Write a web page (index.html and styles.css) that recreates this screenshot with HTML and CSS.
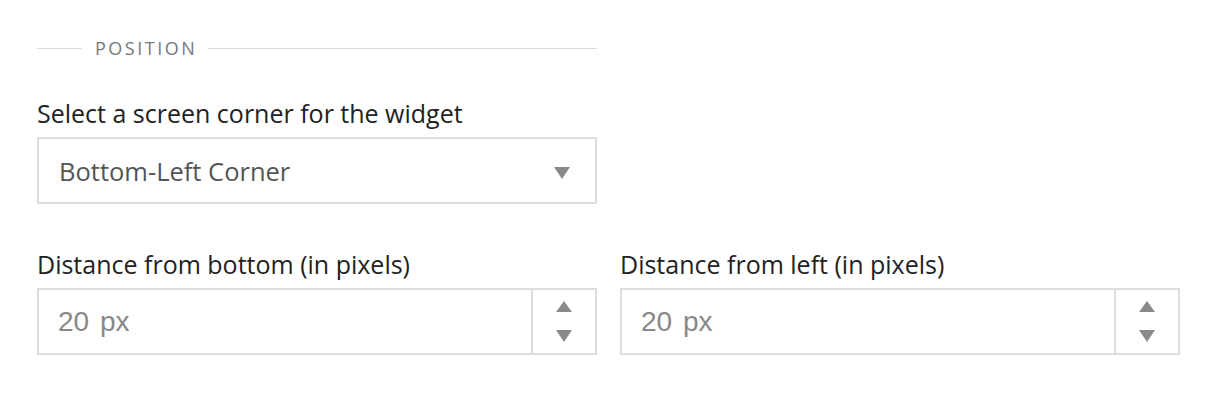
FILE: index.html
```html
<!DOCTYPE html>
<html>
<head>
<meta charset="utf-8">
<link rel="stylesheet" href="styles.css">
</head>
<body>
<div class="panel">
  <div class="section-title">
    <span class="line line-short"></span>
    <span class="title-text">POSITION</span>
    <span class="line line-long"></span>
  </div>

  <div class="field field-select">
    <label class="label">Select a screen corner for the widget</label>
    <div class="select">
      <span class="select-value">Bottom-Left Corner</span>
      <svg class="caret" width="16" height="12" viewBox="0 0 16 12"><polygon points="0,0 16,0 8,12" fill="#8a8a8a"/></svg>
    </div>
  </div>

  <div class="row">
    <div class="field">
      <label class="label">Distance from bottom (in pixels)</label>
      <div class="number">
        <span class="number-value">20 px</span>
        <div class="spinner">
          <svg width="16" height="11" viewBox="0 0 16 11"><polygon points="8,0 16,11 0,11" fill="#8a8a8a"/></svg>
          <svg width="16" height="12" viewBox="0 0 16 12"><polygon points="0,0 16,0 8,12" fill="#8a8a8a"/></svg>
        </div>
      </div>
    </div>
    <div class="field">
      <label class="label">Distance from left (in pixels)</label>
      <div class="number">
        <span class="number-value">20 px</span>
        <div class="spinner">
          <svg width="16" height="11" viewBox="0 0 16 11"><polygon points="8,0 16,11 0,11" fill="#8a8a8a"/></svg>
          <svg width="16" height="12" viewBox="0 0 16 12"><polygon points="0,0 16,0 8,12" fill="#8a8a8a"/></svg>
        </div>
      </div>
    </div>
  </div>
</div>
</body>
</html>
```

FILE: styles.css
```css
html, body {
  margin: 0;
  padding: 0;
  background: #ffffff;
}

body {
  font-family: "Open Sans", "Noto Sans", sans-serif;
  color: #222222;
}

.panel {
  padding: 36px 0 0 37px;
  width: 1143px;
}

.section-title {
  display: flex;
  align-items: center;
  width: 560px;
  height: 24px;
}

.line {
  height: 1px;
  background: #dcdcdc;
}

.line-short {
  width: 45px;
}

.line-long {
  flex: 1;
}

.title-text {
  font-size: 18px;
  letter-spacing: 2.5px;
  color: #777777;
  margin: 0 11px 0 13px;
  line-height: 24px;
}

.field-select {
  margin-top: 38px;
  width: 560px;
}

.label {
  display: block;
  font-size: 25px;
  line-height: 30px;
  color: #222222;
  margin-bottom: 9px;
}

.select {
  box-sizing: border-box;
  height: 67px;
  border: 2px solid #dddddd;
  display: flex;
  align-items: center;
  justify-content: space-between;
  padding: 0 25px 0 20px;
}

.select-value {
  font-size: 25.5px;
  color: #555555;
}

.caret {
  display: block;
  margin-top: 4px;
}

.row {
  display: grid;
  grid-template-columns: 560px 560px;
  column-gap: 23px;
  margin-top: 45px;
}

.number {
  box-sizing: border-box;
  height: 67px;
  border: 2px solid #dddddd;
  display: flex;
  align-items: stretch;
}

.number-value {
  flex: 1;
  display: flex;
  align-items: center;
  padding-left: 19px;
  font-family: "Liberation Sans", Arial, sans-serif;
  font-size: 28px;
  word-spacing: 3px;
  color: #888888;
}

.spinner {
  width: 62px;
  border-left: 2px solid #dddddd;
  display: flex;
  flex-direction: column;
  align-items: center;
  justify-content: center;
  gap: 18px;
}

.spinner svg {
  display: block;
}
```
